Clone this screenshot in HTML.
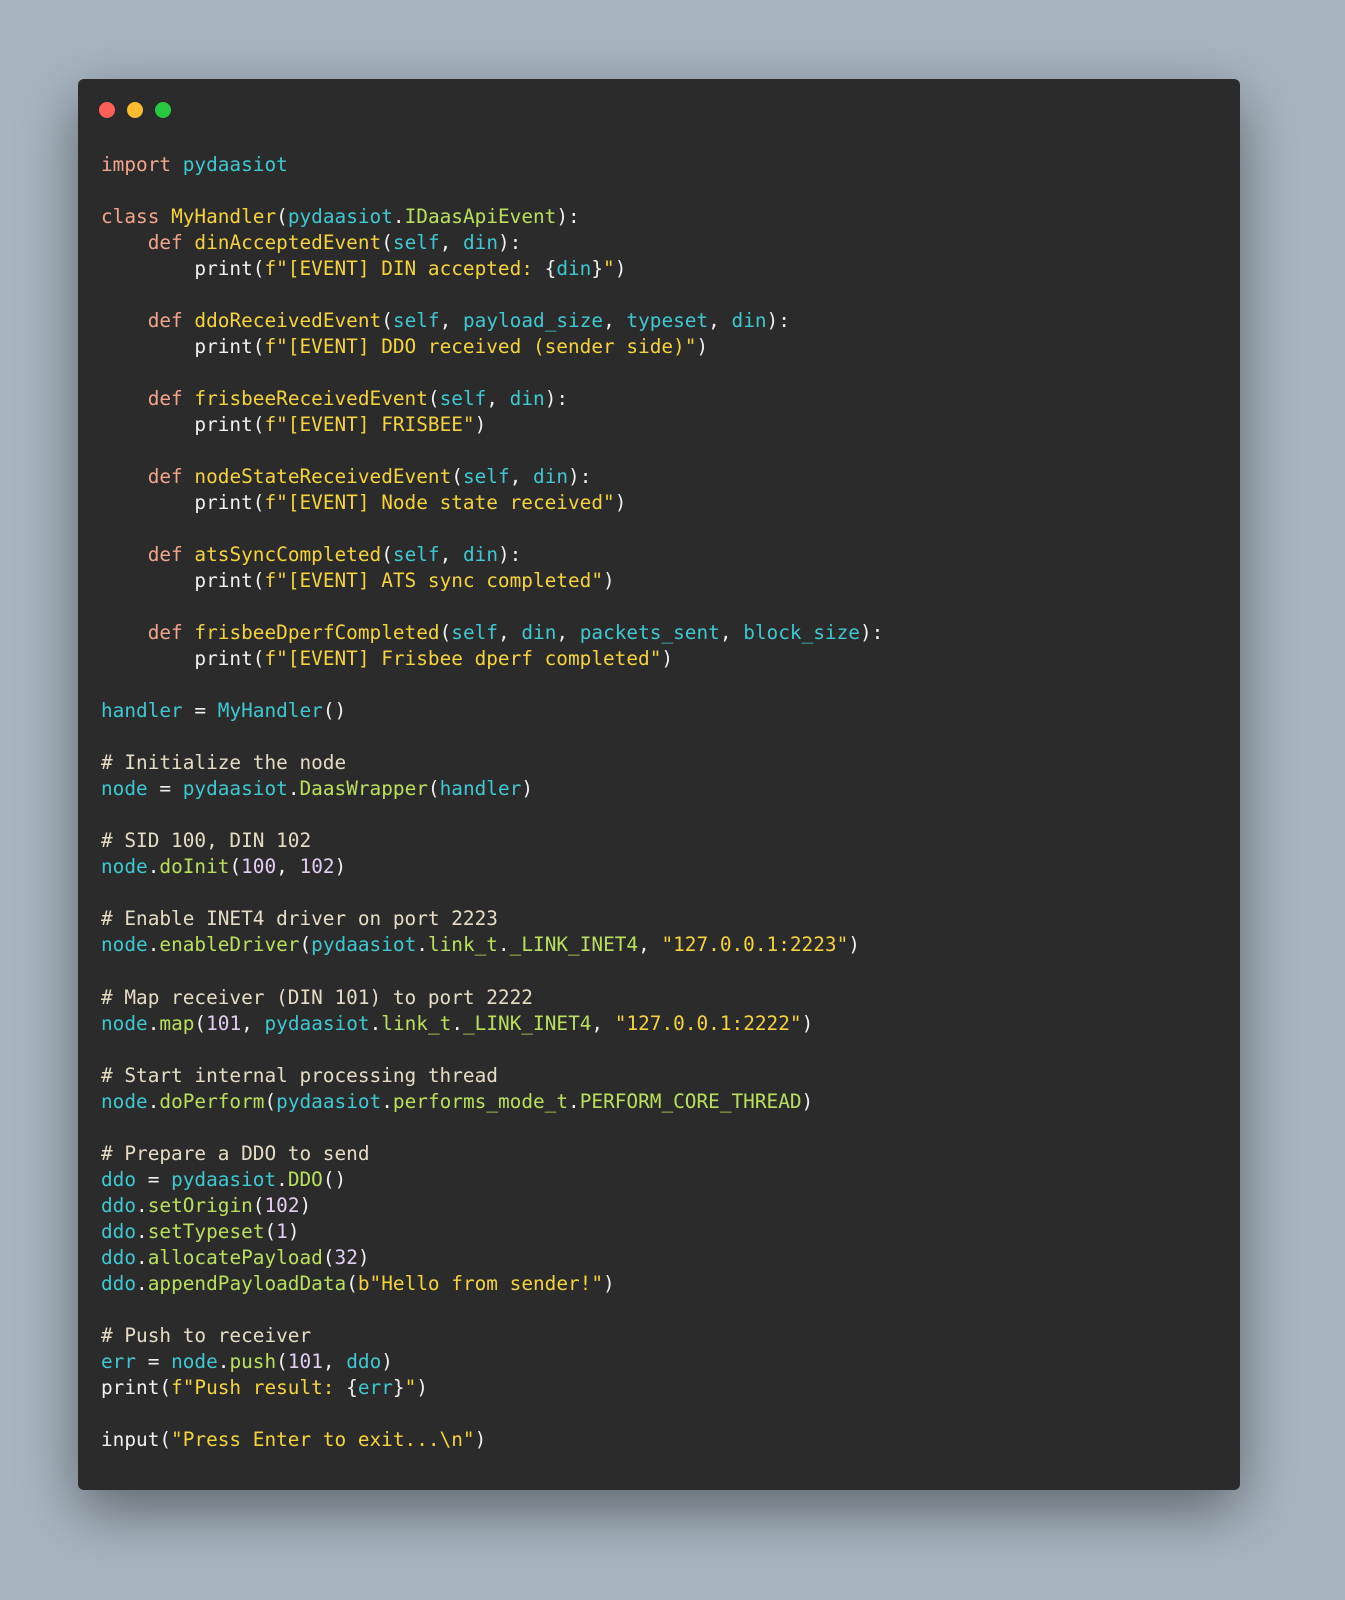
<!DOCTYPE html>
<html><head><meta charset="utf-8"><style>
html,body{margin:0;padding:0}
body{width:1345px;height:1600px;background:#a8b5c1;position:relative;overflow:hidden}
.win{position:absolute;left:78px;top:79px;width:1162px;height:1411px;background:#2b2b2b;border-radius:6px;box-shadow:0 20px 60px rgba(0,0,0,.45)}
.dot{position:absolute;top:23px;width:16px;height:16px;border-radius:50%}
pre{position:absolute;left:23px;top:73px;margin:0;font-family:"DejaVu Sans Mono","Liberation Mono",monospace;font-size:19.4px;line-height:26.02px;color:#f0f0f0}
.k{color:#f2a58c}.c{color:#3ec8d2}.y{color:#f5d33c}.g{color:#b8e05c}.m{color:#e6dcc4}.n{color:#e4cdf2}
</style></head><body>
<div class="win">
<div class="dot" style="left:21px;background:#fe5f57"></div>
<div class="dot" style="left:49px;background:#febc2e"></div>
<div class="dot" style="left:77px;background:#28c840"></div>
<pre><span class="k">import</span> <span class="c">pydaasiot</span>

<span class="k">class</span> <span class="y">MyHandler</span>(<span class="c">pydaasiot</span>.<span class="g">IDaasApiEvent</span>):
    <span class="k">def</span> <span class="y">dinAcceptedEvent</span>(<span class="c">self</span>, <span class="c">din</span>):
        print(<span class="y">f"[EVENT] DIN accepted: </span>{<span class="c">din</span>}<span class="y">"</span>)

    <span class="k">def</span> <span class="y">ddoReceivedEvent</span>(<span class="c">self</span>, <span class="c">payload_size</span>, <span class="c">typeset</span>, <span class="c">din</span>):
        print(<span class="y">f"[EVENT] DDO received (sender side)"</span>)

    <span class="k">def</span> <span class="y">frisbeeReceivedEvent</span>(<span class="c">self</span>, <span class="c">din</span>):
        print(<span class="y">f"[EVENT] FRISBEE"</span>)

    <span class="k">def</span> <span class="y">nodeStateReceivedEvent</span>(<span class="c">self</span>, <span class="c">din</span>):
        print(<span class="y">f"[EVENT] Node state received"</span>)

    <span class="k">def</span> <span class="y">atsSyncCompleted</span>(<span class="c">self</span>, <span class="c">din</span>):
        print(<span class="y">f"[EVENT] ATS sync completed"</span>)

    <span class="k">def</span> <span class="y">frisbeeDperfCompleted</span>(<span class="c">self</span>, <span class="c">din</span>, <span class="c">packets_sent</span>, <span class="c">block_size</span>):
        print(<span class="y">f"[EVENT] Frisbee dperf completed"</span>)

<span class="c">handler</span> = <span class="c">MyHandler</span>()

<span class="m"># Initialize the node</span>
<span class="c">node</span> = <span class="c">pydaasiot</span>.<span class="g">DaasWrapper</span>(<span class="c">handler</span>)

<span class="m"># SID 100, DIN 102</span>
<span class="c">node</span>.<span class="g">doInit</span>(<span class="n">100</span>, <span class="n">102</span>)

<span class="m"># Enable INET4 driver on port 2223</span>
<span class="c">node</span>.<span class="g">enableDriver</span>(<span class="c">pydaasiot</span>.<span class="g">link_t</span>.<span class="g">_LINK_INET4</span>, <span class="y">"127.0.0.1:2223"</span>)

<span class="m"># Map receiver (DIN 101) to port 2222</span>
<span class="c">node</span>.<span class="g">map</span>(<span class="n">101</span>, <span class="c">pydaasiot</span>.<span class="g">link_t</span>.<span class="g">_LINK_INET4</span>, <span class="y">"127.0.0.1:2222"</span>)

<span class="m"># Start internal processing thread</span>
<span class="c">node</span>.<span class="g">doPerform</span>(<span class="c">pydaasiot</span>.<span class="g">performs_mode_t</span>.<span class="g">PERFORM_CORE_THREAD</span>)

<span class="m"># Prepare a DDO to send</span>
<span class="c">ddo</span> = <span class="c">pydaasiot</span>.<span class="g">DDO</span>()
<span class="c">ddo</span>.<span class="g">setOrigin</span>(<span class="n">102</span>)
<span class="c">ddo</span>.<span class="g">setTypeset</span>(<span class="n">1</span>)
<span class="c">ddo</span>.<span class="g">allocatePayload</span>(<span class="n">32</span>)
<span class="c">ddo</span>.<span class="g">appendPayloadData</span>(<span class="y">b"Hello from sender!"</span>)

<span class="m"># Push to receiver</span>
<span class="c">err</span> = <span class="c">node</span>.<span class="g">push</span>(<span class="n">101</span>, <span class="c">ddo</span>)
print(<span class="y">f"Push result: </span>{<span class="c">err</span>}<span class="y">"</span>)

input(<span class="y">"Press Enter to exit...\n"</span>)</pre>
</div>
</body></html>
